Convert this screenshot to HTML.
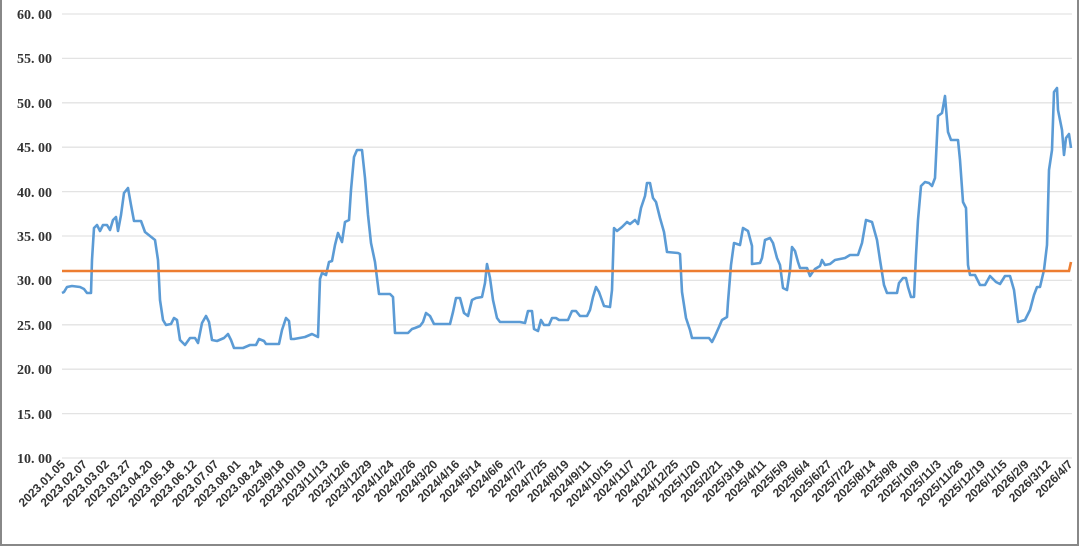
<!DOCTYPE html>
<html><head><meta charset="utf-8"><style>
html,body{margin:0;padding:0;background:#fff;}
svg{display:block}
</style></head><body>
<svg width="1080" height="548" xmlns="http://www.w3.org/2000/svg">
<rect x="1" y="-2" width="1077" height="547" fill="#fff" stroke="#888" stroke-width="2"/>
<g stroke="#e3e3e3" stroke-width="1.3">
<line x1="62" y1="14" x2="1072" y2="14"/><line x1="62" y1="58.4" x2="1072" y2="58.4"/>
<line x1="62" y1="102.8" x2="1072" y2="102.8"/><line x1="62" y1="147.2" x2="1072" y2="147.2"/>
<line x1="62" y1="191.6" x2="1072" y2="191.6"/><line x1="62" y1="236" x2="1072" y2="236"/>
<line x1="62" y1="280.4" x2="1072" y2="280.4"/><line x1="62" y1="324.8" x2="1072" y2="324.8"/>
<line x1="62" y1="369.2" x2="1072" y2="369.2"/><line x1="62" y1="413.6" x2="1072" y2="413.6"/>
<line x1="62" y1="458" x2="1072" y2="458"/>
</g>
<g font-family="Liberation Serif, serif" font-size="14" fill="#333" font-weight="bold" text-anchor="end">
<text x="52" y="19">60. 00</text><text x="52" y="63">55. 00</text><text x="52" y="108">50. 00</text>
<text x="52" y="152">45. 00</text><text x="52" y="197">40. 00</text><text x="52" y="241">35. 00</text>
<text x="52" y="285">30. 00</text><text x="52" y="330">25. 00</text><text x="52" y="374">20. 00</text>
<text x="52" y="419">15. 00</text><text x="52" y="463">10. 00</text>
</g>
<polyline fill="none" stroke="#5b9bd5" stroke-width="2.6" stroke-linejoin="round" points="62,293 64,292 67,287 72,286 80,287 84,289 87,293 91,293 92,260 94,228 97,225 100,231 103,225 107,225 110,230 113,220 116,217 118,231 121,215 124,193 128,188 131,205 134,221 141,221 145,232 150,236 155,240 158,260 160,300 163,320 166,325 171,324 174,318 177,320 180,340 185,345 190,338 195,338 198,343 202,323 206,316 209,322 212,340 217,341 224,338 228,334 231,340 234,348 243,348 250,345 256,345 259,339 264,341 266,344 279,344 282,330 286,318 289,321 291,339 294,339 305,337 312,334 318,337 320,279 322,273 326,275 329,262 332,261 335,245 338,233 342,242 345,222 349,220 351,190 354,157 357,150 362,150 365,178 368,215 371,243 375,262 377,278 379,294 390,294 393,297 395,333 408,333 412,329 415,328 420,326 423,322 426,313 430,316 434,324 450,324 453,312 456,298 460,298 464,313 468,316 472,300 476,298 482,297 485,283 487,264 490,278 493,300 497,318 500,322 520,322 525,323 528,311 532,311 534,329 538,331 541,320 544,325 549,325 552,318 556,318 559,320 568,320 572,311 576,311 580,316 587,316 590,310 593,297 596,287 599,292 604,306 610,307 612,290 614,228 617,231 622,227 627,222 630,224 635,220 638,224 641,208 645,196 647,183 650,183 653,198 656,202 660,218 664,232 667,252 678,253 680,254 682,292 686,318 690,330 692,338 709,338 712,342 715,336 719,327 722,320 727,317 728,302 731,265 734,243 740,245 743,228 748,231 752,246 752,264 760,263 762,258 765,240 770,238 773,243 777,258 780,265 783,288 787,290 790,270 792,247 795,251 798,262 800,268 807,268 810,276 812,273 815,269 820,266 822,260 825,265 830,264 835,260 840,259 845,258 850,255 855,255 858,255 862,243 866,220 872,222 877,240 880,260 884,285 887,293 897,293 899,283 903,278 906,278 908,287 911,297 914,297 916,255 918,220 921,186 925,182 929,183 932,186 935,178 938,116 942,113 945,96 948,132 951,140 958,140 960,160 963,202 966,208 968,265 970,275 975,275 980,285 985,285 990,276 996,282 1000,284 1005,276 1010,276 1014,290 1018,322 1025,320 1030,310 1034,295 1037,287 1040,287 1044,270 1047,245 1049,170 1052,150 1054,92 1057,88 1058,110 1062,130 1064,155 1066,138 1069,134 1071,148"/>
<polyline fill="none" stroke="#ed7d31" stroke-width="2.6" points="62,271 1069,271 1071,262"/>
<g font-family="Liberation Sans, sans-serif" font-size="12" font-weight="bold" fill="#333" text-anchor="end">
<text transform="translate(66,465) rotate(-45)">2023.01.05</text>
<text transform="translate(87.9,465) rotate(-45)">2023.02.07</text>
<text transform="translate(109.8,465) rotate(-45)">2023.03.02</text>
<text transform="translate(131.7,465) rotate(-45)">2023.03.27</text>
<text transform="translate(153.6,465) rotate(-45)">2023.04.20</text>
<text transform="translate(175.5,465) rotate(-45)">2023.05.18</text>
<text transform="translate(197.4,465) rotate(-45)">2023.06.12</text>
<text transform="translate(219.3,465) rotate(-45)">2023.07.07</text>
<text transform="translate(241.2,465) rotate(-45)">2023.08.01</text>
<text transform="translate(263.1,465) rotate(-45)">2023.08.24</text>
<text transform="translate(285,465) rotate(-45)">2023/9/18</text>
<text transform="translate(306.9,465) rotate(-45)">2023/10/19</text>
<text transform="translate(328.8,465) rotate(-45)">2023/11/13</text>
<text transform="translate(350.7,465) rotate(-45)">2023/12/6</text>
<text transform="translate(372.6,465) rotate(-45)">2023/12/29</text>
<text transform="translate(394.5,465) rotate(-45)">2024/1/24</text>
<text transform="translate(416.4,465) rotate(-45)">2024/2/26</text>
<text transform="translate(438.3,465) rotate(-45)">2024/3/20</text>
<text transform="translate(460.2,465) rotate(-45)">2024/4/16</text>
<text transform="translate(482.1,465) rotate(-45)">2024/5/14</text>
<text transform="translate(504,465) rotate(-45)">2024/6/6</text>
<text transform="translate(525.9,465) rotate(-45)">2024/7/2</text>
<text transform="translate(547.8,465) rotate(-45)">2024/7/25</text>
<text transform="translate(569.7,465) rotate(-45)">2024/8/19</text>
<text transform="translate(591.6,465) rotate(-45)">2024/9/11</text>
<text transform="translate(613.5,465) rotate(-45)">2024/10/15</text>
<text transform="translate(635.4,465) rotate(-45)">2024/11/7</text>
<text transform="translate(657.3,465) rotate(-45)">2024/12/2</text>
<text transform="translate(679.2,465) rotate(-45)">2024/12/25</text>
<text transform="translate(701.1,465) rotate(-45)">2025/1/20</text>
<text transform="translate(723,465) rotate(-45)">2025/2/21</text>
<text transform="translate(744.9,465) rotate(-45)">2025/3/18</text>
<text transform="translate(766.8,465) rotate(-45)">2025/4/11</text>
<text transform="translate(788.7,465) rotate(-45)">2025/5/9</text>
<text transform="translate(810.6,465) rotate(-45)">2025/6/4</text>
<text transform="translate(832.5,465) rotate(-45)">2025/6/27</text>
<text transform="translate(854.4,465) rotate(-45)">2025/7/22</text>
<text transform="translate(876.3,465) rotate(-45)">2025/8/14</text>
<text transform="translate(898.2,465) rotate(-45)">2025/9/8</text>
<text transform="translate(920.1,465) rotate(-45)">2025/10/9</text>
<text transform="translate(942,465) rotate(-45)">2025/11/3</text>
<text transform="translate(963.9,465) rotate(-45)">2025/11/26</text>
<text transform="translate(985.8,465) rotate(-45)">2025/12/19</text>
<text transform="translate(1007.7,465) rotate(-45)">2026/1/15</text>
<text transform="translate(1029.6,465) rotate(-45)">2026/2/9</text>
<text transform="translate(1051.5,465) rotate(-45)">2026/3/12</text>
<text transform="translate(1073.4,465) rotate(-45)">2026/4/7</text>
</g>
</svg>
</body></html>
